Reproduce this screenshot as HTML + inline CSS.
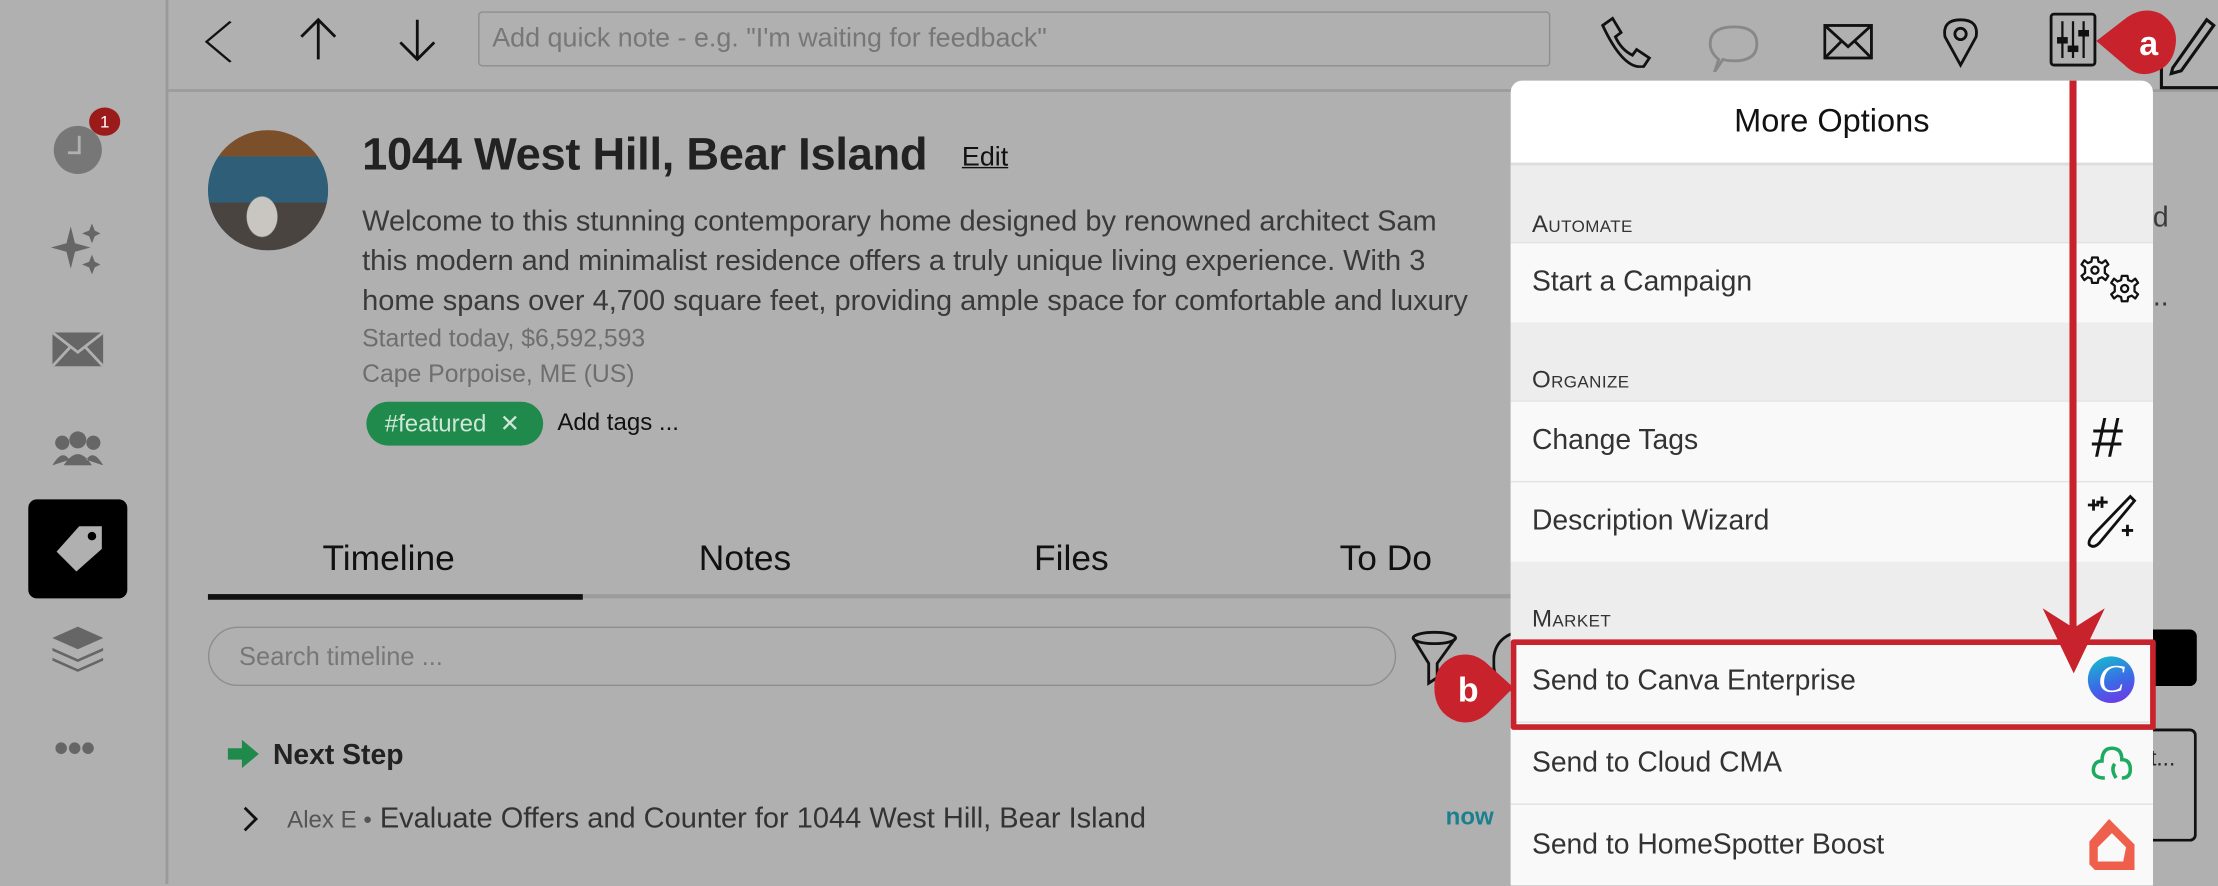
<!DOCTYPE html>
<html><head><meta charset="utf-8"><style>
html,body{margin:0;padding:0;width:2218px;height:884px;overflow:hidden;background:#b0b0b0}
#w{position:absolute;left:0;top:0;width:1568px;height:625px;transform:scale(1.41454);transform-origin:0 0;font-family:"Liberation Sans",sans-serif;color:#222;background:#b0b0b0}
.a{position:absolute}
.row{position:absolute;left:1068px;width:454px;background:#faf9f9;border-top:1px solid #e2e2e2;font-size:20px;color:#333}
.row span{position:absolute;left:15px;top:50%;transform:translateY(-50%)}
.sec{position:absolute;left:1068px;width:454px;background:#ededed;font-size:17px;color:#333}
.sec span{position:absolute;left:15px;bottom:4px;font-variant:small-caps;letter-spacing:.3px}
</style></head><body><div id="w">
<div class="a" style="left:117px;top:0;width:2px;height:625px;background:#9a9a9a"></div>
<div class="a" style="left:119px;top:63px;width:1449px;height:2px;background:#9c9c9c"></div>
<div class="a" style="left:38px;top:89px;width:34px;height:34px;border-radius:50%;background:#777"></div>
<div class="a" style="left:48px;top:96px;width:7px;height:11px;border-right:2px solid #b0b0b0;border-bottom:2px solid #b0b0b0"></div>
<div class="a" style="left:63px;top:76px;width:22px;height:20px;border-radius:50%;background:#9b1b1b;color:#fff;font-size:12px;text-align:center;line-height:20px">1</div>
<svg class="a" style="left:36px;top:158px" width="40" height="40" viewBox="0 0 40 40" fill="#666"><path d="M14 2 L17 14 L28 17 L17 20 L14 32 L11 20 L0 17 L11 14Z"/><path d="M29 0 L31 5 L35 7 L31 9 L29 14 L27 9 L22 7 L27 5Z"/><path d="M29 22 L31 27 L35 29 L31 31 L29 36 L27 31 L22 29 L27 27Z"/></svg>
<svg class="a" style="left:37px;top:235px" width="36" height="24" viewBox="0 0 36 24"><rect width="36" height="24" fill="#666"/><path d="M0 0 L18 14 L36 0 M0 24 L13 10 M36 24 L23 10" stroke="#b0b0b0" stroke-width="2" fill="none"/></svg>
<svg class="a" style="left:37px;top:303px" width="36" height="26" viewBox="0 0 36 26" fill="#666"><circle cx="18" cy="8" r="6"/><circle cx="7" cy="10" r="5"/><circle cx="29" cy="10" r="5"/><path d="M8 26 Q18 10 28 26Z M0 26 Q7 14 12 22Z M36 26 Q29 14 24 22Z"/></svg>
<div class="a" style="left:20px;top:353px;width:70px;height:70px;background:#000;border-radius:6px"></div>
<svg class="a" style="left:36px;top:370px" width="38" height="36" viewBox="0 0 38 36"><path d="M20 2 L36 2 L36 18 L18 34 L4 20Z" fill="#b0b0b0"/><circle cx="29" cy="9" r="3" fill="#000"/></svg>
<svg class="a" style="left:37px;top:443px" width="36" height="32" viewBox="0 0 36 32" fill="#666"><path d="M18 0 L36 8 L18 16 L0 8Z"/><path d="M0 15 L18 23 L36 15 L36 17 L18 25 L0 17Z"/><path d="M0 22 L18 30 L36 22 L36 24 L18 32 L0 24Z"/></svg>
<div class="a" style="left:38px;top:520px;font-size:30px;color:#666;letter-spacing:-1px;line-height:20px">•••</div>
<svg class="a" style="left:140px;top:10px" width="180" height="36" viewBox="0 0 180 36" fill="none" stroke="#111" stroke-width="2"><path d="M23 5 L6 27 L23 49" transform="scale(1,0.65) translate(0,3)"/><path d="M85 4 L85 32 M73 16 L85 4 L97 16"/><path d="M155 4 L155 32 M143 20 L155 32 L167 20"/></svg>
<div class="a" style="left:338px;top:8px;width:758px;border:1.5px solid #8e8e8e;border-radius:3px;font-size:19px;color:#777;line-height:37px;padding-left:9px;box-sizing:border-box;height:39px">Add quick note - e.g. "I'm waiting for feedback"</div>
<svg class="a" style="left:1128px;top:10px" width="40" height="38" viewBox="0 0 40 38" fill="none" stroke="#111" stroke-width="2"><path d="M5 8 L12 3 L18 13 L14 16 Q18 25 26 29 L29 25 L38 31 L34 37 Q20 40 5 8Z"/></svg>
<svg class="a" style="left:1207px;top:15px" width="40" height="36" viewBox="0 0 40 36" fill="none" stroke="#888" stroke-width="2"><path d="M5 36 L8 27 Q2 22 2 16 Q2 4 19 4 Q35 4 35 16 Q35 28 19 28 Q14 28 11 27Z"/></svg>
<svg class="a" style="left:1289px;top:17px" width="36" height="26" viewBox="0 0 36 26" fill="none" stroke="#111" stroke-width="2"><rect x="1" y="1" width="33" height="23"/><path d="M1 1 L17.5 16 L34 1 M1 24 L13 12 M34 24 L22 12"/></svg>
<svg class="a" style="left:1372px;top:12px" width="28" height="36" viewBox="0 0 28 36" fill="none" stroke="#111" stroke-width="2"><path d="M14 34 L3 14 Q1 2 14 2 Q27 2 25 14Z"/><circle cx="14" cy="12" r="4"/></svg>
<div class="a" style="left:1449px;top:9px;width:33px;height:38px;border:2px solid #111;border-radius:3px;box-sizing:border-box"></div>
<svg class="a" style="left:1449px;top:9px" width="33" height="38" viewBox="0 0 33 38" stroke="#111" stroke-width="1.6"><path d="M9 6 L9 32 M16.5 6 L16.5 32 M24 6 L24 32"/><rect x="6" y="18" width="6" height="3" fill="#111"/><rect x="13.5" y="24" width="6" height="3" fill="#111"/><rect x="21" y="13" width="6" height="3" fill="#111"/></svg>
<svg class="a" style="left:1520px;top:8px" width="48" height="56" viewBox="0 0 48 56" fill="none" stroke="#111" stroke-width="2.2"><path d="M8 18 L8 54 L48 54"/><path d="M16 40 L40 6 L45 10 L22 42 L15 44Z"/></svg>
<svg class="a" style="left:1478px;top:2px" width="66" height="56" viewBox="0 0 66 56"><path d="M4 27 L26 10 Q38 2 50 8 Q62 16 60 30 Q58 46 42 50 Q32 52 24 44Z" fill="#c8222c"/><text x="41" y="37" font-family="Liberation Sans" font-weight="bold" font-size="24" fill="#fff" text-anchor="middle">a</text></svg>
<div class="a" style="left:147px;top:92px;width:85px;height:85px;border-radius:50%;background:radial-gradient(ellipse at 45% 72%,#c9c6c2 0 16%,transparent 17%),linear-gradient(180deg,#7b4f2a 0 22%,#2f5f78 22% 60%,#4a4440 60%);"></div>
<div class="a" style="left:256px;top:91px;font-size:32px;font-weight:bold;color:#222;letter-spacing:-.2px">1044 West Hill, Bear Island</div>
<div class="a" style="left:680px;top:101px;font-size:19px;text-decoration:underline;color:#111">Edit</div>
<div class="a" style="left:256px;top:143px;font-size:20.5px;line-height:28px;color:#3a3a3a;width:812px;white-space:nowrap;overflow:hidden">Welcome to this stunning contemporary home designed by renowned architect Sam<br>this modern and minimalist residence offers a truly unique living experience. With 3<br>home spans over 4,700 square feet, providing ample space for comfortable and luxury</div>
<div class="a" style="left:1522px;top:143px;font-size:20px;color:#3a3a3a">d</div>
<div class="a" style="left:1522px;top:199px;font-size:20px;color:#3a3a3a">..</div>
<div class="a" style="left:256px;top:227px;font-size:17.5px;line-height:25px;color:#6e6e6e">Started today, $6,592,593<br>Cape Porpoise, ME (US)</div>
<div class="a" style="left:259px;top:284px;width:125px;height:31px;border-radius:16px;background:#1f8a4c;color:#cfe6d8;font-size:17px;line-height:31px;padding-left:13px;box-sizing:border-box">#featured &nbsp;✕</div>
<div class="a" style="left:394px;top:289px;font-size:17px;color:#111">Add tags ...</div>
<div class="a" style="left:147px;top:420px;width:921px;height:3px;background:#9c9c9c"></div>
<div class="a" style="left:147px;top:420px;width:265px;height:4px;background:#111"></div>
<div class="a" style="left:228px;top:381px;font-size:25px;color:#111">Timeline</div>
<div class="a" style="left:494px;top:381px;font-size:25px;color:#111">Notes</div>
<div class="a" style="left:731px;top:381px;font-size:25px;color:#111">Files</div>
<div class="a" style="left:947px;top:381px;font-size:25px;color:#111">To Do</div>
<div class="a" style="left:147px;top:443px;width:840px;height:42px;border:1.5px solid #8e8e8e;border-radius:21px;box-sizing:border-box;font-size:18px;color:#777;line-height:40px;padding-left:21px">Search timeline ...</div>
<svg class="a" style="left:996px;top:445px" width="36" height="40" viewBox="0 0 36 40" fill="none" stroke="#111" stroke-width="2"><ellipse cx="18" cy="6" rx="15" ry="4"/><path d="M3 6 L14 24 L14 38 L20 34 L20 24 L33 6"/></svg>
<div class="a" style="left:1055px;top:446px;width:30px;height:40px;border:2px solid #111;border-radius:20px 0 0 20px;border-right:none"></div>
<div class="a" style="left:1522px;top:445px;width:31px;height:40px;background:#000;border-radius:0 5px 5px 0"></div>
<div class="a" style="left:1520px;top:515px;width:31px;height:76px;border:2px solid #111;border-left:none;border-radius:0 5px 5px 0;font-size:16px;line-height:40px">t...</div>
<svg class="a" style="left:161px;top:523px" width="22" height="20" viewBox="0 0 22 20"><path d="M0 6 L10 6 L10 0 L22 10 L10 20 L10 14 L0 14Z" fill="#1f8a4c"/></svg>
<div class="a" style="left:193px;top:523px;font-size:20px;font-weight:bold;color:#222">Next Step</div>
<svg class="a" style="left:170px;top:569px" width="14" height="20" viewBox="0 0 14 20" fill="none" stroke="#111" stroke-width="2"><path d="M3 2 L11 10 L3 18"/></svg>
<div class="a" style="left:203px;top:567px;font-size:20.5px;color:#333"><span style="font-size:17px;color:#555">Alex E •</span> Evaluate Offers and Counter for 1044 West Hill, Bear Island</div>
<div class="a" style="left:1022px;top:568px;font-size:17px;font-weight:bold;color:#1c7f8e">now</div>
<div class="a" style="left:1068px;top:57px;width:454px;height:568px;background:#fff;border-radius:8px 8px 0 0"></div>
<div class="a" style="left:1068px;top:72px;width:454px;text-align:center;font-size:23px;color:#111">More Options</div>
<div class="sec" style="top:115px;height:56px;border-top:2px solid #ddd"><span>Automate</span></div>
<div class="row" style="top:171px;height:56px"><span>Start a Campaign</span></div>
<div class="sec" style="top:228px;height:55px"><span>Organize</span></div>
<div class="row" style="top:283px;height:56px"><span>Change Tags</span></div>
<div class="row" style="top:340px;height:56px"><span>Description Wizard</span></div>
<div class="sec" style="top:397px;height:55px"><span>Market</span></div>
<div class="row" style="top:452px;height:57px"><span>Send to Canva Enterprise</span></div>
<div class="row" style="top:510px;height:57px"><span>Send to Cloud CMA</span></div>
<div class="row" style="top:568px;height:57px"><span>Send to HomeSpotter Boost</span></div>
<svg class="a" style="left:1470px;top:180px" width="46" height="40" viewBox="0 0 46 40" fill="none" stroke="#111" stroke-width="1.6" stroke-linejoin="round">
<g transform="translate(11,11)"><path d="M-2 -9 L2 -9 L2.5 -6 L5 -5 L7.5 -7 L9.5 -4 L7 -2 L7 2 L9.5 4 L7.5 7 L5 5 L2.5 6 L2 9 L-2 9 L-2.5 6 L-5 5 L-7.5 7 L-9.5 4 L-7 2 L-7 -2 L-9.5 -4 L-7.5 -7 L-5 -5 L-2.5 -6Z"/><circle r="2.5"/></g>
<g transform="translate(32,24)"><path d="M-2 -9 L2 -9 L2.5 -6 L5 -5 L7.5 -7 L9.5 -4 L7 -2 L7 2 L9.5 4 L7.5 7 L5 5 L2.5 6 L2 9 L-2 9 L-2.5 6 L-5 5 L-7.5 7 L-9.5 4 L-7 2 L-7 -2 L-9.5 -4 L-7.5 -7 L-5 -5 L-2.5 -6Z"/><circle r="2.5"/></g></svg>
<div class="a" style="left:1478px;top:290px;font-size:40px;font-style:italic;color:#111;line-height:40px">#</div>
<svg class="a" style="left:1474px;top:349px" width="38" height="40" viewBox="0 0 38 40" fill="none" stroke="#111" stroke-width="2"><path d="M2 8 L10 8 M6 4 L6 12 M12 2 L12 10 M8 6 L16 6 M26 26 L34 26 M30 22 L30 30"/><path d="M32 2 L35 5 L10 35 Q6 39 3 36 Q2 33 6 29Z"/></svg>
<div class="a" style="left:1476px;top:464px;width:33px;height:33px;border-radius:50%;background:linear-gradient(160deg,#13c3c9,#3b6ae6 55%,#7a2ee6);color:#fff;font-family:'Liberation Serif',serif;font-style:italic;font-size:28px;line-height:33px;text-align:center">C</div>
<svg class="a" style="left:1478px;top:526px" width="30" height="28" viewBox="0 0 30 28" fill="none" stroke="#1faa62" stroke-width="2.5"><path d="M10 24 Q1 24 2 17 Q3 12 8 12 Q8 3 15 3 Q22 3 22 11 Q28 11 28 18 Q28 24 22 24 M18 24 Q14 18 17 14"/></svg>
<svg class="a" style="left:1477px;top:579px" width="32" height="36" viewBox="0 0 32 36" fill="#ee5f4c"><path d="M14 0 L32 18 L32 36 L4 36 L0 32 L0 16Z M6 20 L6 30 L24 30 L26 20 L16 10Z" fill-rule="evenodd"/></svg>
<div class="a" style="left:1463px;top:57px;width:5px;height:400px;background:#c8222c"></div>
<svg class="a" style="left:1444px;top:430px" width="44" height="46" viewBox="0 0 44 46"><path d="M0 0 L22 14 L44 0 L22 46Z" fill="#c8222c"/></svg>
<div class="a" style="left:1068px;top:452px;width:456px;height:64px;border:4px solid #c8222c;box-sizing:border-box;border-radius:2px"></div>
<svg class="a" style="left:1010px;top:458px" width="62" height="58" viewBox="0 0 62 58"><path d="M60 28 L40 10 Q30 2 18 6 Q4 12 4 28 Q4 46 20 52 Q32 55 42 46Z" fill="#c8222c"/><text x="28" y="38" font-family="Liberation Sans" font-weight="bold" font-size="24" fill="#fff" text-anchor="middle">b</text></svg>
</div></body></html>
